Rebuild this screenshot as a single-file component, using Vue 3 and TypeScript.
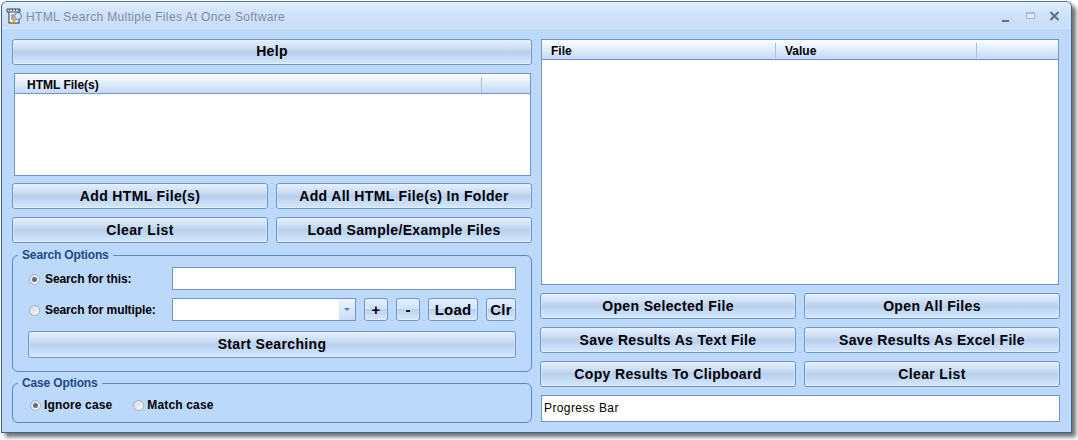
<script setup lang="ts">
const rightButtons: string[] = [
  'Open Selected File', 'Open All Files',
  'Save Results As Text File', 'Save Results As Excel File',
  'Copy Results To Clipboard', 'Clear List',
]
</script>

<template>
  <div class="window">
    <header class="titlebar">
      <svg class="app-icon" width="18" height="18" viewBox="0 0 18 18">
        <rect x="3" y="3" width="10" height="13" fill="#fff" stroke="#333" stroke-width="1" />
        <path d="M1 2h13v3H1z" fill="#dfe8f4" stroke="#345" stroke-width="1" />
        <path d="M3 3h1M6 3h1M9 3h1M12 3h1" stroke="#111" stroke-width="1" />
        <path d="M5 8h3M5 10h3M5 12h3" stroke="#555" stroke-width="1" />
        <circle cx="12" cy="9" r="3.5" fill="#cfe6fb" stroke="#5a7ea8" stroke-width="1" />
        <path d="M9.5 12 6.5 16" stroke="#e59a22" stroke-width="2" />
      </svg>
      <span class="title">HTML Search Multiple Files At Once Software</span>
      <div class="controls">
        <span class="min"></span>
        <span class="max"></span>
        <svg width="11" height="10" viewBox="0 0 11 10" class="close">
          <path d="M1.5 1 9.5 9M9.5 1 1.5 9" stroke="#5f7288" stroke-width="2.2" fill="none" />
        </svg>
      </div>
    </header>

    <main class="body">
      <section class="col left">
        <button class="btn help">Help</button>
        <div class="list file-list">
          <div class="list-head">
            <span class="head-cell html-cell">HTML File(s)</span>
            <span class="head-rest"></span>
          </div>
        </div>
        <div class="pair">
          <button class="btn">Add HTML File(s)</button>
          <button class="btn">Add All HTML File(s) In Folder</button>
          <button class="btn">Clear List</button>
          <button class="btn">Load Sample/Example Files</button>
        </div>

        <fieldset class="group search">
          <legend>Search Options</legend>
          <div class="row">
            <label class="radio"><span class="dot on"></span>Search for this:</label>
            <div class="text-input"></div>
          </div>
          <div class="row row-two">
            <label class="radio"><span class="dot"></span>Search for multiple:</label>
            <div class="combo">
              <span class="combo-arrow"><i></i></span>
            </div>
            <button class="btn small plus">+</button>
            <button class="btn small minus">-</button>
            <button class="btn small load">Load</button>
            <button class="btn small clr">Clr</button>
          </div>
          <button class="btn start">Start Searching</button>
        </fieldset>

        <fieldset class="group case">
          <legend>Case Options</legend>
          <div class="case-row">
            <label class="radio"><span class="dot on"></span>Ignore case</label>
            <label class="radio"><span class="dot"></span>Match case</label>
          </div>
        </fieldset>
      </section>

      <section class="col right">
        <div class="list result-list">
          <div class="list-head">
            <span class="head-cell file-cell">File</span>
            <span class="head-cell value-cell">Value</span>
            <span class="head-rest"></span>
          </div>
        </div>
        <div class="pair right-pair">
          <button v-for="label in rightButtons" :key="label" class="btn">{{ label }}</button>
        </div>
        <div class="progress">Progress Bar</div>
      </section>
    </main>
  </div>
</template>

<style>
html, body { background: #fff; min-height: 440px; }
</style>

<style scoped>
.window {
  box-sizing: border-box;
  width: 1071px;
  height: 432px;
  margin: 1px 0 0 1px;
  background: #bcd8fb;
  border: 1px solid #3f5f8c;
  border-top-color: #4f6f9b;
  border-radius: 6px 6px 0 0;
  box-shadow: 4px 4px 4px rgba(50, 50, 50, .7);
  font-family: "Liberation Sans", Arial, sans-serif;
  color: #000;
  overflow: hidden;
}
.titlebar {
  box-sizing: border-box;
  height: 27px;
  display: flex;
  align-items: center;
  padding: 4px 11px 0 4px;
  background: linear-gradient(#e3eefc, #cfe2fa 45%, #c8ddf9);
  border-bottom: 1px solid #dbeafd;
}
.app-icon { flex: none; margin-top: -3px; }
.title {
  margin-left: 2px;
  font-size: 12px;
  letter-spacing: .36px;
  color: #7e8ea4;
}
.controls {
  margin-left: auto;
  margin-top: -3px;
  display: flex;
  align-items: center;
  gap: 14px;
}
.min {
  width: 7px;
  height: 2px;
  margin-top: 10px;
  background: #5f7288;
}
.max {
  width: 9px;
  height: 7px;
  box-sizing: border-box;
  border: 1px solid #a9bbd0;
  border-top-width: 2px;
  background: #dce9fa;
  margin-left: 3px;
}
.close { margin-left: 0; }

.body {
  display: flex;
  gap: 8px;
  padding: 10px 10px 0 10px;
}
.col {
  width: 520px;
  flex: none;
  display: flex;
  flex-direction: column;
}
.btn {
  box-sizing: border-box;
  display: block;
  height: 26px;
  padding: 0;
  border: 1px solid #6f96c7;
  border-radius: 3px;
  background: linear-gradient(#e2effe 0, #d6e6fb 20%, #b9cfec 52%, #c3d9f5 70%, #d6e8fe 100%);
  box-shadow: inset 0 0 0 1px rgba(255, 255, 255, .25);
  font: bold 14px "Liberation Sans", Arial, sans-serif;
  letter-spacing: .35px;
  color: #000;
  text-align: center;
}
.help { width: 520px; padding-bottom: 2px; }
.list {
  box-sizing: border-box;
  background: #fff;
  border: 1px solid #6f96c7;
}
.file-list {
  width: 517px;
  height: 103px;
  margin: 8px 0 7px 2px;
}
.result-list {
  width: 518px;
  height: 246px;
  margin: 0 0 8px 1px;
}
.list-head {
  box-sizing: border-box;
  display: flex;
  height: 20px;
  background: linear-gradient(#fff, #eaf3fe 30%, #c4daf7);
  border-bottom: 1px solid #6f96c7;
  font-size: 12px;
  font-weight: bold;
}
.head-cell {
  box-sizing: border-box;
  padding-left: 9px;
  border-right: 1px solid #a4c2e8;
  height: 15px;
  line-height: 17px;
  margin-top: 3px;
}
.html-cell { width: 467px; padding-left: 12px; }
.file-cell { width: 234px; }
.value-cell { width: 201px; }
.head-rest { flex: 1; }

.pair {
  display: grid;
  grid-template-columns: 256px 256px;
  column-gap: 8px;
  row-gap: 8px;
}
.group {
  box-sizing: border-box;
  margin: 0;
  width: 520px;
  min-width: 0;
  border: 1px solid #5f8ac4;
  border-radius: 6px;
  padding: 0;
}
.group legend {
  margin-left: 5px;
  padding: 0 4px;
  font-size: 12px;
  font-weight: bold;
  line-height: 14px;
  letter-spacing: -.15px;
  color: #1f4a86;
}
.search {
  height: 124px;
  margin-top: 5px;
  padding: 5px 15px 0;
}
.search legend { margin-left: -10px; }
.case {
  height: 47px;
  margin-top: 4px;
}
.row {
  display: flex;
  align-items: center;
  height: 23px;
}
.row-two { margin-top: 8px; }
.radio {
  display: flex;
  align-items: center;
  font-size: 12px;
  font-weight: bold;
  letter-spacing: -.1px;
}
.row .radio {
  width: 144px;
  padding: 1px 0 0 1px;
  box-sizing: border-box;
}
.dot {
  box-sizing: border-box;
  position: relative;
  width: 11px;
  height: 11px;
  margin-right: 5px;
  border: 1px solid #a8b2bf;
  border-radius: 50%;
  background: linear-gradient(135deg, #d3d7dc, #fafbfc);
  flex: none;
}
.dot.on::after {
  content: "";
  position: absolute;
  left: 2px;
  top: 2px;
  width: 5px;
  height: 5px;
  border-radius: 50%;
  background: #5f6f82;
}
.text-input {
  box-sizing: border-box;
  width: 344px;
  height: 23px;
  background: #fff;
  border: 1px solid #6f96c7;
}
.combo {
  box-sizing: border-box;
  width: 184px;
  height: 23px;
  margin-right: 8px;
  background: #fff;
  border: 1px solid #6f96c7;
  display: flex;
  justify-content: flex-end;
}
.combo-arrow {
  width: 16px;
  background: linear-gradient(#eef5fe, #c9dcf5);
  display: flex;
  align-items: center;
  justify-content: center;
}
.combo-arrow i {
  display: block;
  width: 0;
  height: 0;
  border: 3px solid transparent;
  border-top: 3px solid #5e7da6;
  border-bottom: 0;
}
.small {
  height: 23px;
  margin-right: 8px;
  font-size: 15px;
  letter-spacing: .2px;
  background: linear-gradient(#e2effe, #d2e3fa 45%, #bbd2ef 50%, #d6e8fe);
}
.plus, .minus { width: 24px; }
.load { width: 50px; }
.clr { width: 30px; margin-right: 0; }
.start {
  width: 488px;
  height: 27px;
  margin-top: 10px;
  padding-bottom: 2px;
}
.case-row {
  display: flex;
  gap: 21px;
  padding: 8px 0 0 17px;
}
.case-row .radio { letter-spacing: .15px; }
.case-row .dot { margin-right: 3px; }
.right-pair { width: 520px; }
.progress {
  box-sizing: border-box;
  width: 519px;
  height: 27px;
  margin: 8px 0 0 1px;
  padding-left: 2px;
  background: #fff;
  border: 1px solid #6f96c7;
  font-size: 12px;
  line-height: 25px;
  letter-spacing: .4px;
}
</style>
